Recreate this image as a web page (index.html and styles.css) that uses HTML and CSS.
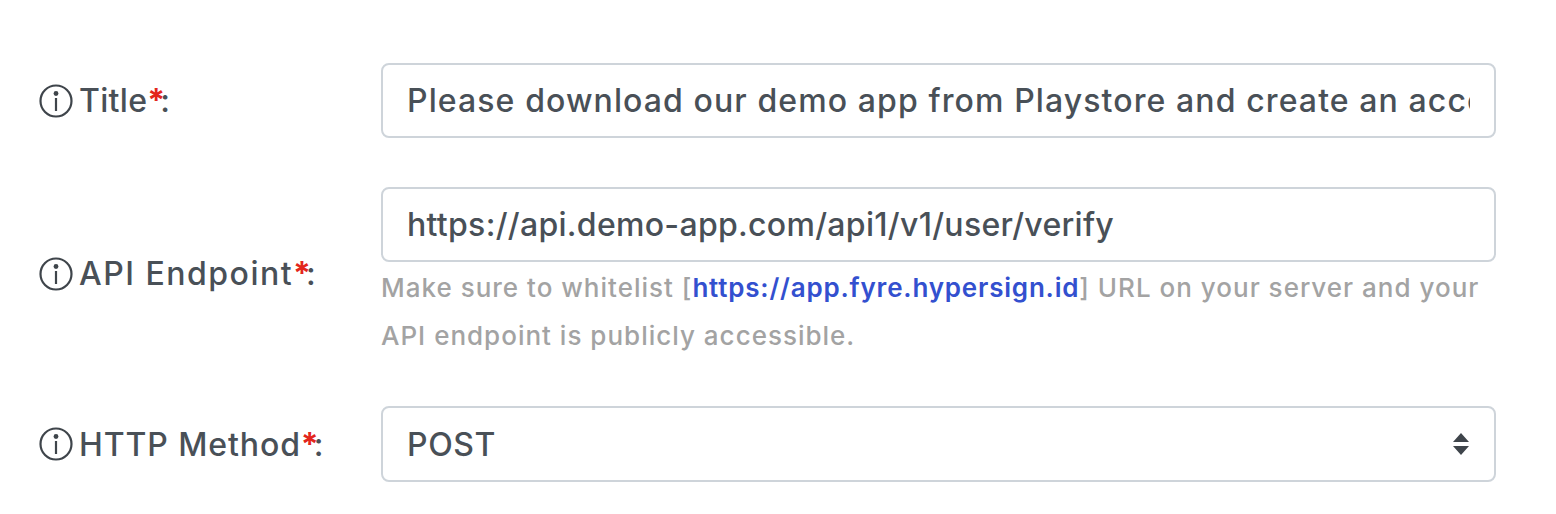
FILE: index.html
```html
<!DOCTYPE html>
<html lang="en">

<head>
    <meta charset="UTF-8">
    <title>Action form</title>
    <link rel="stylesheet" href="styles.css">
</head>

<body>
    <form class="action-form">
        <div class="form-row">
            <label class="form-label" for="title">
                <svg class="info-icon" viewBox="0 0 34 34"><circle cx="17" cy="17" r="15.5"/><circle class="dot" cx="17" cy="9.5" r="2.4"/><path d="M17 14v13"/></svg>
                <span>Title<span class="required">*</span>:</span>
            </label>
            <div class="form-control">
                <div class="field"><input id="title" class="text-input title-input" type="text" value="Please download our demo app from Playstore and create an account"></div>
            </div>
        </div>

        <div class="form-row row-endpoint">
            <label class="form-label" for="endpoint">
                <svg class="info-icon" viewBox="0 0 34 34"><circle cx="17" cy="17" r="15.5"/><circle class="dot" cx="17" cy="9.5" r="2.4"/><path d="M17 14v13"/></svg>
                <span>API Endpoint<span class="required">*</span>:</span>
            </label>
            <div class="form-control">
                <div class="field"><input id="endpoint" class="text-input" type="text" value="https://api.demo-app.com/api1/v1/user/verify"></div>
                <small class="hint">Make sure to whitelist [<a href="#">https://app.fyre.hypersign.id</a>] URL on your server and your API endpoint is publicly accessible.</small>
            </div>
        </div>

        <div class="form-row row-method">
            <label class="form-label" for="method">
                <svg class="info-icon" viewBox="0 0 34 34"><circle cx="17" cy="17" r="15.5"/><circle class="dot" cx="17" cy="9.5" r="2.4"/><path d="M17 14v13"/></svg>
                <span>HTTP Method<span class="required">*</span>:</span>
            </label>
            <div class="form-control">
                <div class="field select-field">
                    <div id="method" class="select-value">POST</div>
                    <svg class="select-arrows" viewBox="0 0 16 22"><path d="M8 0l8 9H0zM0 13h16l-8 9z"/></svg>
                </div>
            </div>
        </div>
    </form>
</body>

</html>
```

FILE: styles.css
```css
body {
    margin: 0;
    background-color: #fff;
    color: #495057;
    font-family: "Inter", "Open Sans", sans-serif;
}

.action-form {
    width: 1457px;
    padding: 63px 60px 0 39px;
}

.form-row {
    display: grid;
    grid-template-columns: 342px 1115px;
    align-items: center;
    margin-bottom: 49px;
}

.row-endpoint {
    margin-bottom: 46px;
}

.form-label {
    display: flex;
    align-items: center;
    gap: 6px;
    font-size: 32px;
    font-weight: 500;
    letter-spacing: 0.3px;
    color: #495057;
}

.row-endpoint .form-label {
    letter-spacing: 1.5px;
}

.row-method .form-label {
    letter-spacing: 0.9px;
}

.form-label .required {
    color: #e3261c;
    font-weight: 700;
    letter-spacing: -3px;
    margin-right: -2px;
}

.info-icon {
    width: 34px;
    height: 34px;
    fill: none;
    stroke: #3f454b;
    stroke-width: 2.2;
}

.info-icon .dot {
    fill: #3f454b;
    stroke: none;
}

.field {
    height: 75px;
    box-sizing: border-box;
    border: 2px solid #ced4da;
    border-radius: 8px;
    padding: 0 24px;
    display: flex;
    align-items: center;
}

.text-input {
    width: 100%;
    border: none;
    outline: none;
    padding: 0;
    font-family: inherit;
    font-size: 32px;
    font-weight: 500;
    letter-spacing: 0.3px;
    color: #495057;
}

.title-input {
    letter-spacing: 1.1px;
}

.select-field {
    justify-content: space-between;
    font-size: 32px;
    font-weight: 500;
    letter-spacing: 0.6px;
    height: 76px;
    padding-right: 25px;
}

.select-arrows {
    width: 16px;
    height: 22px;
    fill: #3f454b;
}

.hint {
    display: block;
    margin-top: 2px;
    font-size: 26px;
    font-weight: 500;
    letter-spacing: 1px;
    line-height: 48px;
    color: #a3a3a3;
}

.hint a {
    color: #3350cf;
    font-weight: 600;
    letter-spacing: 0.8px;
    text-decoration: none;
}
```
